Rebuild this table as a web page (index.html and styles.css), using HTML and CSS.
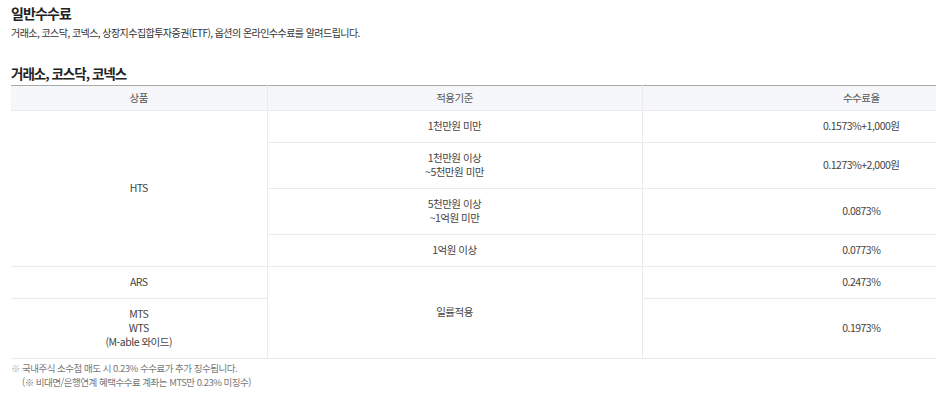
FILE: index.html
```html
<!DOCTYPE html>
<html lang="ko">
<head>
<meta charset="utf-8">
<title>일반수수료</title>
<link rel="stylesheet" href="styles.css">
</head>
<body>
<div class="wrap">
  <h1 class="title">일반수수료</h1>
  <p class="desc">거래소, 코스닥, 코넥스, 상장지수집합투자증권(ETF), 옵션의 온라인수수료를 알려드립니다.</p>
  <h2 class="subtitle">거래소, 코스닥, 코넥스</h2>
  <table class="fee">
    <colgroup>
      <col class="c1">
      <col class="c2">
      <col class="c3">
    </colgroup>
    <thead>
      <tr><th>상품</th><th>적용기준</th><th>수수료율</th></tr>
    </thead>
    <tbody>
      <tr><td rowspan="4">HTS</td><td>1천만원 미만</td><td>0.1573%+1,000원</td></tr>
      <tr><td>1천만원 이상<br>~5천만원 미만</td><td>0.1273%+2,000원</td></tr>
      <tr><td>5천만원 이상<br>~1억원 미만</td><td>0.0873%</td></tr>
      <tr><td>1억원 이상</td><td>0.0773%</td></tr>
      <tr><td>ARS</td><td rowspan="2">일률적용</td><td>0.2473%</td></tr>
      <tr><td>MTS<br>WTS<br>(M-able 와이드)</td><td>0.1973%</td></tr>
    </tbody>
  </table>
  <ul class="notes">
    <li><span class="mark">※</span><span class="note-text">국내주식 소수점 매도 시 0.23% 수수료가 추가 징수됩니다.<br>(※ 비대면/은행연계 혜택수수료 계좌는 MTS만 0.23% 미징수)</span></li>
  </ul>
</div>
</body>
</html>
```

FILE: styles.css
```css
html, body {
  margin: 0;
  padding: 0;
  background: #fff;
  overflow: hidden;
}
body {
  font-family: "Noto Sans CJK KR", "Noto Sans", sans-serif;
  color: #333;
}
.wrap {
  width: 1069px;
  padding: 3px 0 0 11px;
}
.title {
  margin: 0;
  font-size: 14px;
  line-height: 20px;
  font-weight: 700;
  letter-spacing: -0.9px;
  color: #222;
}
.desc {
  margin: 2px 0 0;
  font-size: 10px;
  line-height: 16px;
  letter-spacing: -0.55px;
  color: #333;
}
.subtitle {
  margin: 23px 0 3px;
  font-size: 13.5px;
  line-height: 18px;
  font-weight: 700;
  letter-spacing: -1px;
  color: #222;
}
.fee {
  width: 1069px;
  table-layout: fixed;
  border-collapse: collapse;
  border-top: 1px solid #a9a9a9;
  font-size: 10.5px;
  line-height: 14px;
  letter-spacing: -0.5px;
  color: #444;
}
.c1 { width: 256px; }
.c2 { width: 375px; }
.c3 { width: 438px; }
.fee th {
  background: #f6f7fa;
  font-weight: 400;
  color: #555;
  padding: 5px 0 5px;
  border-bottom: 1px solid #ebebeb;
  border-left: 1px solid #ebebeb;
  text-align: center;
}
.fee td {
  padding: 8px 0 9px;
  border-bottom: 1px solid #ebebeb;
  border-left: 1px solid #ebebeb;
  text-align: center;
  vertical-align: middle;
}
.fee th:first-child,
.fee tbody tr:first-child td:first-child,
.fee tbody tr:nth-child(5) td:first-child,
.fee tbody tr:nth-child(6) td:first-child {
  border-left: 0;
}
.notes {
  list-style: none;
  margin: 2px 0 0;
  padding: 0;
  font-size: 9.5px;
  line-height: 14px;
  letter-spacing: -0.5px;
  color: #777;
}
.notes li {
  display: flex;
  gap: 3px;
}
.mark {
  color: #aaa;
  width: 8px;
}
```
